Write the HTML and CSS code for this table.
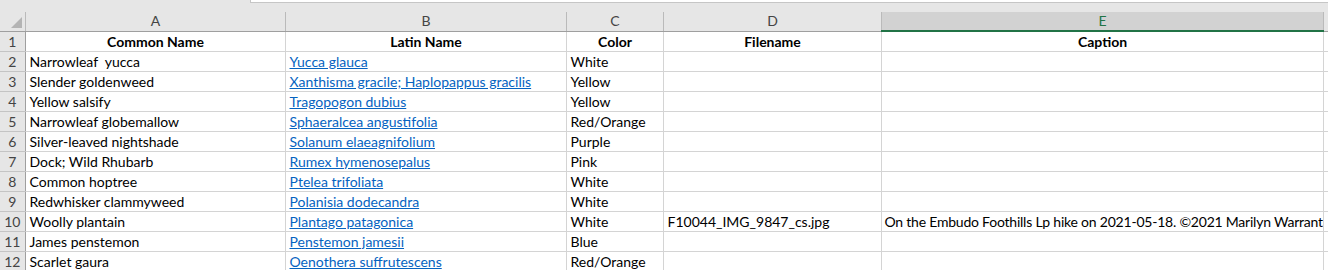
FILE: index.html
```html
<!DOCTYPE html>
<html lang="en">
<head>
  <meta charset="UTF-8" />
  <title>Wildflowers</title>
  <link rel="stylesheet" href="styles.css">
</head>
<body>
  <div class="formula-strip"><div class="formula-edge"></div></div>

  <table class="sheet">
    <colgroup>
      <col class="c-row">
      <col class="c-a">
      <col class="c-b">
      <col class="c-c">
      <col class="c-d">
      <col class="c-e">
      <col class="c-f">
    </colgroup>
    <thead>
      <tr>
        <th class="corner"><span class="select-all"></span></th>
        <th>A</th>
        <th>B</th>
        <th>C</th>
        <th>D</th>
        <th class="active">E</th>
        <th></th>
      </tr>
    </thead>
    <tbody>
      <tr class="titles">
        <td class="rn">1</td>
        <td>Common Name</td>
        <td>Latin Name</td>
        <td>Color</td>
        <td>Filename</td>
        <td>Caption</td>
        <td></td>
      </tr>
      <tr><td class="rn">2</td><td>Narrowleaf  yucca</td><td><a href="#">Yucca glauca</a></td><td>White</td><td></td><td></td><td></td></tr>
      <tr><td class="rn">3</td><td>Slender goldenweed</td><td><a href="#">Xanthisma gracile; Haplopappus gracilis</a></td><td>Yellow</td><td></td><td></td><td></td></tr>
      <tr><td class="rn">4</td><td>Yellow salsify</td><td><a href="#">Tragopogon dubius</a></td><td>Yellow</td><td></td><td></td><td></td></tr>
      <tr><td class="rn">5</td><td>Narrowleaf globemallow</td><td><a href="#">Sphaeralcea angustifolia</a></td><td>Red/Orange</td><td></td><td></td><td></td></tr>
      <tr><td class="rn">6</td><td>Silver-leaved nightshade</td><td><a href="#">Solanum elaeagnifolium</a></td><td>Purple</td><td></td><td></td><td></td></tr>
      <tr><td class="rn">7</td><td>Dock; Wild Rhubarb</td><td><a href="#">Rumex hymenosepalus</a></td><td>Pink</td><td></td><td></td><td></td></tr>
      <tr><td class="rn">8</td><td>Common hoptree</td><td><a href="#">Ptelea trifoliata</a></td><td>White</td><td></td><td></td><td></td></tr>
      <tr><td class="rn">9</td><td>Redwhisker clammyweed</td><td><a href="#">Polanisia dodecandra</a></td><td>White</td><td></td><td></td><td></td></tr>
      <tr><td class="rn">10</td><td>Woolly plantain</td><td><a href="#">Plantago patagonica</a></td><td>White</td><td>F10044_IMG_9847_cs.jpg</td><td class="caption">On the Embudo Foothills Lp hike on 2021-05-18. ©2021 Marilyn Warrant</td><td></td></tr>
      <tr><td class="rn">11</td><td>James penstemon</td><td><a href="#">Penstemon jamesii</a></td><td>Blue</td><td></td><td></td><td></td></tr>
      <tr><td class="rn">12</td><td>Scarlet gaura</td><td><a href="#">Oenothera suffrutescens</a></td><td>Red/Orange</td><td></td><td></td><td></td></tr>
    </tbody>
  </table>
</body>
</html>
```

FILE: styles.css
```css
body {
  margin: 0;
  background-color: #e6e6e6;
  font-family: Lato, "Open Sans", sans-serif;
  overflow: hidden;
}

/* bottom edge of the formula bar */
.formula-strip {
  height: 12px;
  padding-left: 250px;
}

.formula-edge {
  height: 3px;
  background-color: #ffffff;
  border-bottom: 1px solid #c6c6c6;
  border-left: 1px solid #c6c6c6;
  box-sizing: border-box;
}

.sheet {
  table-layout: fixed;
  border-collapse: collapse;
  width: 1340px;
  background-color: #ffffff;
}

.c-row { width: 25px; }
.c-a { width: 260px; }
.c-b { width: 281px; }
.c-c { width: 97px; }
.c-d { width: 218px; }
.c-e { width: 442px; }
.c-f { width: 17px; }

th, td {
  height: 20px;
  padding: 0 3px 0 4px;
  box-sizing: border-box;
  white-space: pre;
  overflow: hidden;
  font-size: 14px;
  line-height: 18px;
}

/* column letters */
th {
  height: 19px;
  background-color: #e6e6e6;
  color: #444444;
  font-weight: normal;
  text-align: center;
  border-right: 1px solid #bababa;
  border-bottom: 1px solid #9f9f9f;
}

th.active {
  background-color: #d2d2d2;
  color: #217346;
  border-bottom: 2px solid #217346;
}

th.corner {
  position: relative;
  padding: 0;
}

.select-all {
  position: absolute;
  right: 3px;
  bottom: 3px;
  width: 0;
  height: 0;
  border-left: 11px solid transparent;
  border-bottom: 11px solid #b4b4b4;
}

td {
  color: #000000;
  border-right: 1px solid #d4d4d4;
  border-bottom: 1px solid #d4d4d4;
  vertical-align: bottom;
}

td.caption {
  padding-left: 3px;
  letter-spacing: -0.22px;
}

/* row numbers */
td.rn {
  background-color: #e6e6e6;
  color: #444444;
  text-align: center;
  padding: 0;
  border-right: 1px solid #9f9f9f;
  border-bottom: 1px solid #c4c4c4;
}

tr.titles td {
  font-weight: bold;
  text-align: center;
}

tr.titles td.rn {
  font-weight: normal;
}

a {
  color: #0563c1;
  text-decoration: underline;
}
```
